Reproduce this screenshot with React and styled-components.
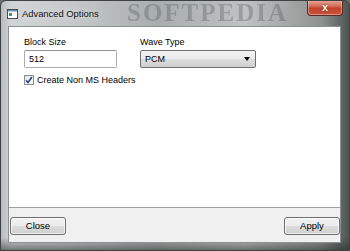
import React from "react";
import styled, { createGlobalStyle } from "styled-components";

const Global = createGlobalStyle`
  html, body { margin: 0; padding: 0; background: #6b6f6f; }
  body { font-family: "Liberation Sans", Arial, sans-serif; }
`;

const Window = styled.div`
  width: 350px;
  height: 251px;
  box-sizing: border-box;
  display: flex;
  flex-direction: column;
  background:
    linear-gradient(180deg, rgba(0,0,0,0) 0%, rgba(0,0,0,0) 95%, rgba(40,45,44,0.55) 100%),
    linear-gradient(90deg, #b9bdbf 0%, #d2d5d6 3%, #c6c9ca 20%, #a9adad 45%, #bfc2c2 70%, #8e9392 92%, #4d5452 100%);
  border: 1px solid #3c4341;
  border-radius: 6px 6px 0 0;
  overflow: hidden;
  position: relative;
`;

const TitleBar = styled.div`
  height: 25px;
  display: flex;
  align-items: center;
  padding-left: 6px;
  gap: 4px;
  position: relative;
  flex-shrink: 0;
`;

const Watermark = styled.div`
  position: absolute;
  left: 126px;
  top: 0px;
  font-family: "Liberation Serif", serif;
  font-weight: bold;
  font-size: 25px;
  line-height: 24px;
  letter-spacing: 2px;
  color: rgba(75, 80, 80, 0.32);
  filter: blur(0.6px);
  pointer-events: none;
`;

const Title = styled.span`
  font-size: 9.4px;
  color: #111;
  text-shadow: 0 0 6px rgba(255,255,255,0.9);
  position: relative;
`;

const CloseX = styled.div`
  position: absolute;
  top: -1px;
  right: 6px;
  width: 34px;
  height: 15px;
  border: 1px solid #5a2a22;
  border-top: none;
  border-radius: 0 0 4px 4px;
  background: linear-gradient(180deg, #e9a899 0%, #d4705c 40%, #c2412a 55%, #c8553c 100%);
  display: flex;
  align-items: center;
  justify-content: center;
  color: #fff;
  font-weight: bold;
  font-size: 11px;
  line-height: 1;
  box-shadow: inset 0 0 0 1px rgba(255,255,255,0.35);
  text-shadow: 0 0 2px #3a1a14;
`;

const Client = styled.div`
  flex: 1;
  margin: 0 8px 7px 7px;
  background: #f0f0f0;
  border: 1px solid #8d9291;
  display: flex;
  flex-direction: column;
`;

const Panel = styled.div`
  height: 181px;
  background: #fff;
  border-bottom: 1px solid #a0a0a0;
  padding: 9px 15px 0 15px;
  box-sizing: border-box;
`;

const Row = styled.div`
  display: flex;
  gap: 23px;
`;

const Field = styled.div`
  display: flex;
  flex-direction: column;
  gap: 2px;
`;

const Label = styled.label`
  font-size: 9px;
  color: #000;
  line-height: 12px;
`;

const TextBox = styled.div`
  width: 93px;
  height: 18px;
  box-sizing: border-box;
  border: 1px solid #abadb3;
  border-top-color: #8e9196;
  border-radius: 2px;
  background: #fff;
  font-size: 9px;
  padding: 0 4px;
  line-height: 16px;
`;

const Select = styled.div`
  width: 116px;
  height: 18px;
  box-sizing: border-box;
  border: 1px solid #707070;
  border-radius: 2px;
  background: linear-gradient(180deg, #f2f2f2 0%, #ebebeb 50%, #dddddd 51%, #cfcfcf 100%);
  font-size: 9px;
  padding: 0 4px;
  line-height: 16px;
  display: flex;
  justify-content: space-between;
  align-items: center;
`;

const Arrow = styled.span`
  width: 0;
  height: 0;
  border-left: 3.5px solid transparent;
  border-right: 3.5px solid transparent;
  border-top: 4px solid #000;
  margin-right: 1px;
`;

const CheckRow = styled.div`
  display: flex;
  align-items: center;
  gap: 3px;
  margin-top: 7px;
  font-size: 9px;
`;

const Box = styled.span`
  width: 10px;
  height: 10px;
  box-sizing: border-box;
  border: 1px solid #8e8f8f;
  background: linear-gradient(135deg, #e6e6e6, #fbfbfb);
  display: flex;
  align-items: center;
  justify-content: center;
`;

const Footer = styled.div`
  flex: 1;
  display: flex;
  justify-content: space-between;
  align-items: center;
  padding: 1px 0 0 1px;
`;

const Button = styled.button`
  width: 56px;
  height: 18px;
  box-sizing: border-box;
  border: 1px solid #707070;
  border-radius: 3px;
  background: linear-gradient(180deg, #f2f2f2 0%, #ebebeb 50%, #dddddd 51%, #cfcfcf 100%);
  box-shadow: inset 0 0 0 1px rgba(255,255,255,0.7);
  font-family: "Liberation Sans", Arial, sans-serif;
  font-size: 9.5px;
  color: #000;
  padding: 0;
  margin: 0;
`;

export default function App() {
  return (
    <>
      <Global />
      <Window>
        <TitleBar>
          <Watermark>SOFTPEDIA</Watermark>
          <svg width="11" height="10" viewBox="0 0 11 10" style={{ position: "relative" }}>
            <rect x="0.5" y="0.5" width="10" height="9" fill="#fff" stroke="#4a4a4a" />
            <rect x="1" y="1" width="9" height="1.5" fill="#6c8fb8" />
            <rect x="2" y="4" width="3" height="3" fill="#3a9a6a" />
          </svg>
          <Title>Advanced Options</Title>
          <CloseX>x</CloseX>
        </TitleBar>
        <Client>
          <Panel>
            <Row>
              <Field>
                <Label>Block Size</Label>
                <TextBox>512</TextBox>
              </Field>
              <Field>
                <Label>Wave Type</Label>
                <Select>
                  PCM
                  <Arrow />
                </Select>
              </Field>
            </Row>
            <CheckRow>
              <Box>
                <svg width="8" height="8" viewBox="0 0 8 8">
                  <path d="M1 4.2 L3 6.5 L7 1" fill="none" stroke="#2b3f8c" strokeWidth="1.5" />
                </svg>
              </Box>
              Create Non MS Headers
            </CheckRow>
          </Panel>
          <Footer>
            <Button>Close</Button>
            <Button>Apply</Button>
          </Footer>
        </Client>
      </Window>
    </>
  );
}
